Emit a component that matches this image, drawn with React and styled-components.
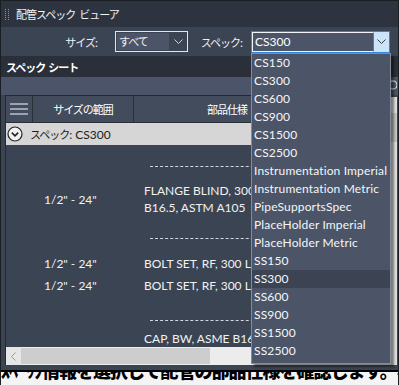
import React from "react";
import styled, { createGlobalStyle } from "styled-components";

const GlobalStyle = createGlobalStyle`
  html, body {
    margin: 0;
    padding: 0;
    background: #1b1e23;
  }
  body {
    font-family: Lato, "Noto Sans CJK JP", sans-serif;
    font-size: 12px;
    color: #f2f2f2;
  }
`;

const Frame = styled.div`
  position: relative;
  width: 399px;
  height: 385px;
  box-sizing: border-box;
  border: 1px solid #1b1e23;
  border-bottom: none;
  background: #3b4453;
  display: flex;
  flex-direction: column;
  overflow: hidden;
`;

const Jp = styled.span`
  font-family: "Noto Sans CJK JP", sans-serif;
  font-size: 11px;
  letter-spacing: -1px;
`;

const WordGap = styled.span`
  display: inline-block;
  width: ${(p) => p.$w}px;
`;

const TitleBar = styled.div`
  height: 26px;
  flex: none;
  background: #2e343f;
  display: flex;
  align-items: center;
  padding-left: 4px;
  gap: 6px;
  color: #f4f4f4;
`;

const Toolbar = styled.div`
  height: 29px;
  flex: none;
  display: flex;
  align-items: center;
`;

const Label = styled.div`
  width: ${(p) => p.$w}px;
  text-align: right;
  margin-right: ${(p) => p.$gap}px;
  color: #eef0f3;
`;

const SizeCombo = styled.div`
  width: 73px;
  height: 21px;
  box-sizing: border-box;
  border: 1px solid #e4e6ea;
  display: flex;
`;

const SizeField = styled.div`
  flex: 1;
  margin: 1px;
  background: #4b5567;
  padding-left: 2px;
  line-height: 17px;
`;

const ArrowBox = styled.div`
  width: ${(p) => p.$w}px;
  display: flex;
  align-items: center;
  justify-content: center;
  background: ${(p) => p.$bg};
`;

const SpecCombo = styled.div`
  width: 139px;
  height: 22px;
  box-sizing: border-box;
  border: 1px solid #2f86dc;
  display: flex;
`;

const SpecField = styled.div`
  flex: 1;
  border: 1px solid #f2f4f8;
  border-right-color: #2f86dc;
  background: #4b5567;
  padding-left: 2px;
  line-height: 18px;
  color: #ffffff;
`;

const SectionHeader = styled.div`
  height: 21px;
  flex: none;
  background: #2a2f39;
  display: flex;
  align-items: center;
  padding-left: 5px;
  font-weight: bold;
  color: #ffffff;
`;

const GridBand = styled.div`
  height: 18px;
  flex: none;
  background: #4b5468;
  display: flex;
  justify-content: flex-end;
  align-items: center;
  padding-right: 1px;
`;

const GridWrap = styled.div`
  height: 270px;
  flex: none;
  display: flex;
`;

const Gutter = styled.div`
  width: 4px;
  flex: none;
`;

const Grid = styled.div`
  flex: 1;
  min-width: 0;
  border-left: 1px solid #242830;
  border-top: 1px solid #242830;
  display: flex;
  flex-direction: column;
  overflow: hidden;
`;

const HeaderRow = styled.div`
  height: 27px;
  flex: none;
  display: flex;
  background: #434c5d;
  border-bottom: 1px solid #2a2f38;
  box-sizing: border-box;
`;

const HeaderCell = styled.div`
  width: ${(p) => (p.$w ? `${p.$w}px` : "auto")};
  flex: ${(p) => (p.$w ? "none" : "1")};
  box-sizing: border-box;
  border-right: 1px solid #2a2f38;
  display: flex;
  align-items: center;
  justify-content: ${(p) => (p.$left ? "flex-start" : "center")};
  padding-left: ${(p) => p.$pad || 0}px;
  color: #ffffff;
  white-space: nowrap;
`;

const Hamburger = styled.div`
  width: 18px;
  display: flex;
  flex-direction: column;
  gap: 3px;
  span {
    height: 2px;
    background: #9da3ad;
  }
`;

const GroupRow = styled.div`
  height: 22px;
  flex: none;
  background: #d6d6d6;
  display: flex;
  align-items: center;
  padding-left: 1px;
  gap: 7px;
  color: #1c1c1c;
  font-size: 12px;
`;

const Body = styled.div`
  height: 202px;
  flex: none;
  box-sizing: border-box;
  padding-top: 21px;
  overflow: hidden;
`;

const Separator = styled.div`
  margin-left: 144px;
  margin-bottom: ${(p) => p.$after}px;
  width: 260px;
  border-top: 1px dashed #d3d7de;
`;

const Row = styled.div`
  display: flex;
  align-items: center;
  min-height: ${(p) => p.$h}px;
  margin-bottom: ${(p) => p.$after || 0}px;
  white-space: nowrap;
`;

const SizeCell = styled.div`
  width: 138px;
  flex: none;
  box-sizing: border-box;
  padding-left: 38px;
  padding-top: ${(p) => p.$shift || 0}px;
`;

const DescCell = styled.div`
  line-height: 17px;
`;

const HScroll = styled.div`
  height: 18px;
  flex: none;
  display: flex;
  background: #ececec;
`;

const ScrollArrow = styled.div`
  width: 15px;
  display: flex;
  align-items: center;
  justify-content: center;
  background: #e6e6e6;
`;

const HThumb = styled.div`
  width: 189px;
  margin: 1px 0;
  background: #cdcdcd;
`;

const VScroll = styled.div`
  width: 6px;
  flex: none;
  margin-top: 2px;
  background: #dedede;
  display: flex;
  flex-direction: column;
`;

const VThumb = styled.div`
  margin-top: 16px;
  height: 29px;
  background: #c3c3c3;
`;

const RightEdge = styled.div`
  width: 1px;
  flex: none;
`;

const Spacer = styled.div`
  height: ${(p) => p.$h}px;
  flex: none;
`;

const Strip = styled.div`
  height: 15px;
  flex: none;
  background: #f4f4f4;
  border-top: 2px solid #000;
  box-sizing: border-box;
  overflow: hidden;
  color: #000;
  font-family: "Noto Sans CJK JP", sans-serif;
  font-weight: 900;
  font-size: 18px;
  line-height: 18px;
  white-space: nowrap;
  div {
    margin-top: -11px;
    letter-spacing: -1px;
  }
`;

const Dropdown = styled.div`
  position: absolute;
  left: 250px;
  top: 52px;
  width: 140px;
  height: 311px;
  box-sizing: border-box;
  background: #4b5567;
  border: 1px solid #858c98;
  box-shadow: 3px 3px 2px rgba(0, 0, 0, 0.45);
  z-index: 2;
`;

const Option = styled.div`
  height: 18px;
  line-height: 18px;
  padding-left: 2px;
  white-space: nowrap;
  overflow: hidden;
  letter-spacing: 0.15px;
  color: #f4f6fa;
  background: ${(p) => (p.$active ? "#3c4453" : "transparent")};
`;

const Chevron = ({ color }) => (
  <svg width="9" height="5" viewBox="0 0 9 5">
    <path d="M0.5 0.5 L4.5 4.5 L8.5 0.5" fill="none" stroke={color} strokeWidth="1" />
  </svg>
);

const Grip = () => (
  <svg width="5" height="13" viewBox="0 0 5 13">
    {[0, 1, 2, 3, 4, 5].map((i) => (
      <g key={i} fill="#8c939e">
        <rect x="0" y={i * 2 + 1} width="1" height="1" />
        <rect x="3" y={i * 2 + 1} width="1" height="1" />
      </g>
    ))}
  </svg>
);

const specs = [
  "CS150",
  "CS300",
  "CS600",
  "CS900",
  "CS1500",
  "CS2500",
  "Instrumentation Imperial",
  "Instrumentation Metric",
  "PipeSupportsSpec",
  "PlaceHolder Imperial",
  "PlaceHolder Metric",
  "SS150",
  "SS300",
  "SS600",
  "SS900",
  "SS1500",
  "SS2500",
];

const App = () => {
  return (
    <>
      <GlobalStyle />
      <Frame>
        <TitleBar>
          <Grip />
          <Jp>
            配管スペック
            <WordGap $w={4} />
            ビューア
          </Jp>
        </TitleBar>

        <Toolbar>
          <Label $w={96} $gap={18}>
            <Jp>サイズ:</Jp>
          </Label>
          <SizeCombo>
            <SizeField>
              <Jp>すべて</Jp>
            </SizeField>
            <ArrowBox $w={17} $bg="#3b4453">
              <Chevron color="#cfd3d9" />
            </ArrowBox>
          </SizeCombo>
          <Label $w={54} $gap={9}>
            <Jp>スペック:</Jp>
          </Label>
          <SpecCombo>
            <SpecField>CS300</SpecField>
            <ArrowBox $w={15} $bg="#cce4f7">
              <Chevron color="#333a44" />
            </ArrowBox>
          </SpecCombo>
        </Toolbar>

        <SectionHeader>
          <Jp>
            スペック
            <WordGap $w={3} />
            シート
          </Jp>
        </SectionHeader>

        <GridBand>
          <svg width="9" height="12" viewBox="0 0 9 12">
            <circle cx="5" cy="5" r="4" fill="none" stroke="#cfd3d9" strokeWidth="1.3" />
            <path d="M2 8 L0 11" stroke="#cfd3d9" strokeWidth="1.5" />
          </svg>
        </GridBand>

        <GridWrap>
          <Gutter />
          <Grid>
            <HeaderRow>
              <HeaderCell $w={27}>
                <Hamburger>
                  <span />
                  <span />
                  <span />
                </Hamburger>
              </HeaderCell>
              <HeaderCell $w={101}>
                <Jp>サイズの範囲</Jp>
              </HeaderCell>
              <HeaderCell $left $pad={73}>
                <Jp>部品仕様</Jp>
              </HeaderCell>
            </HeaderRow>

            <GroupRow>
              <svg width="16" height="16" viewBox="0 0 16 16">
                <circle cx="8" cy="8" r="7" fill="#f2f2f2" stroke="#222" strokeWidth="1.2" />
                <path d="M4.8 6.6 L8 9.8 L11.2 6.6" fill="none" stroke="#222" strokeWidth="1.6" />
              </svg>
              <span>
                <Jp>スペック</Jp>: CS300
              </span>
            </GroupRow>

            <Body>
              <Separator $after={15} />
              <Row $h={34} $after={22}>
                <SizeCell>1/2" - 24"</SizeCell>
                <DescCell>
                  FLANGE BLIND, 300 LB, RF, ASME
                  <br />
                  B16.5, ASTM A105
                </DescCell>
              </Row>
              <Separator $after={13} />
              <Row $h={22}>
                <SizeCell>1/2" - 24"</SizeCell>
                <DescCell>BOLT SET, RF, 300 LB, A193 B7</DescCell>
              </Row>
              <Row $h={22} $after={24}>
                <SizeCell>1/2" - 24"</SizeCell>
                <DescCell>BOLT SET, RF, 300 LB, A193 B7</DescCell>
              </Row>
              <Separator $after={9} />
              <Row $h={34}>
                <SizeCell $shift={6}>3" - 24"</SizeCell>
                <DescCell>
                  CAP, BW, ASME B16.9, ASTM A234
                  <br />
                  WPB, SCH STD
                </DescCell>
              </Row>
            </Body>

            <HScroll>
              <ScrollArrow>
                <svg width="5" height="9" viewBox="0 0 5 9">
                  <path d="M4.5 0.5 L0.5 4.5 L4.5 8.5" fill="none" stroke="#9a9a9a" strokeWidth="1" />
                </svg>
              </ScrollArrow>
              <HThumb />
            </HScroll>
          </Grid>
          <VScroll>
            <VThumb />
          </VScroll>
          <RightEdge />
        </GridWrap>

        <Spacer $h={5} />
        <Strip>
          <div>ｽﾍﾟｯｸ情報を選択して配管の部品仕様を確認します。表示する仕様の一覧</div>
        </Strip>

        <Dropdown>
          {specs.map((s) => (
            <Option key={s} $active={s === "SS300"}>
              {s}
            </Option>
          ))}
        </Dropdown>
      </Frame>
    </>
  );
};

export default App;
